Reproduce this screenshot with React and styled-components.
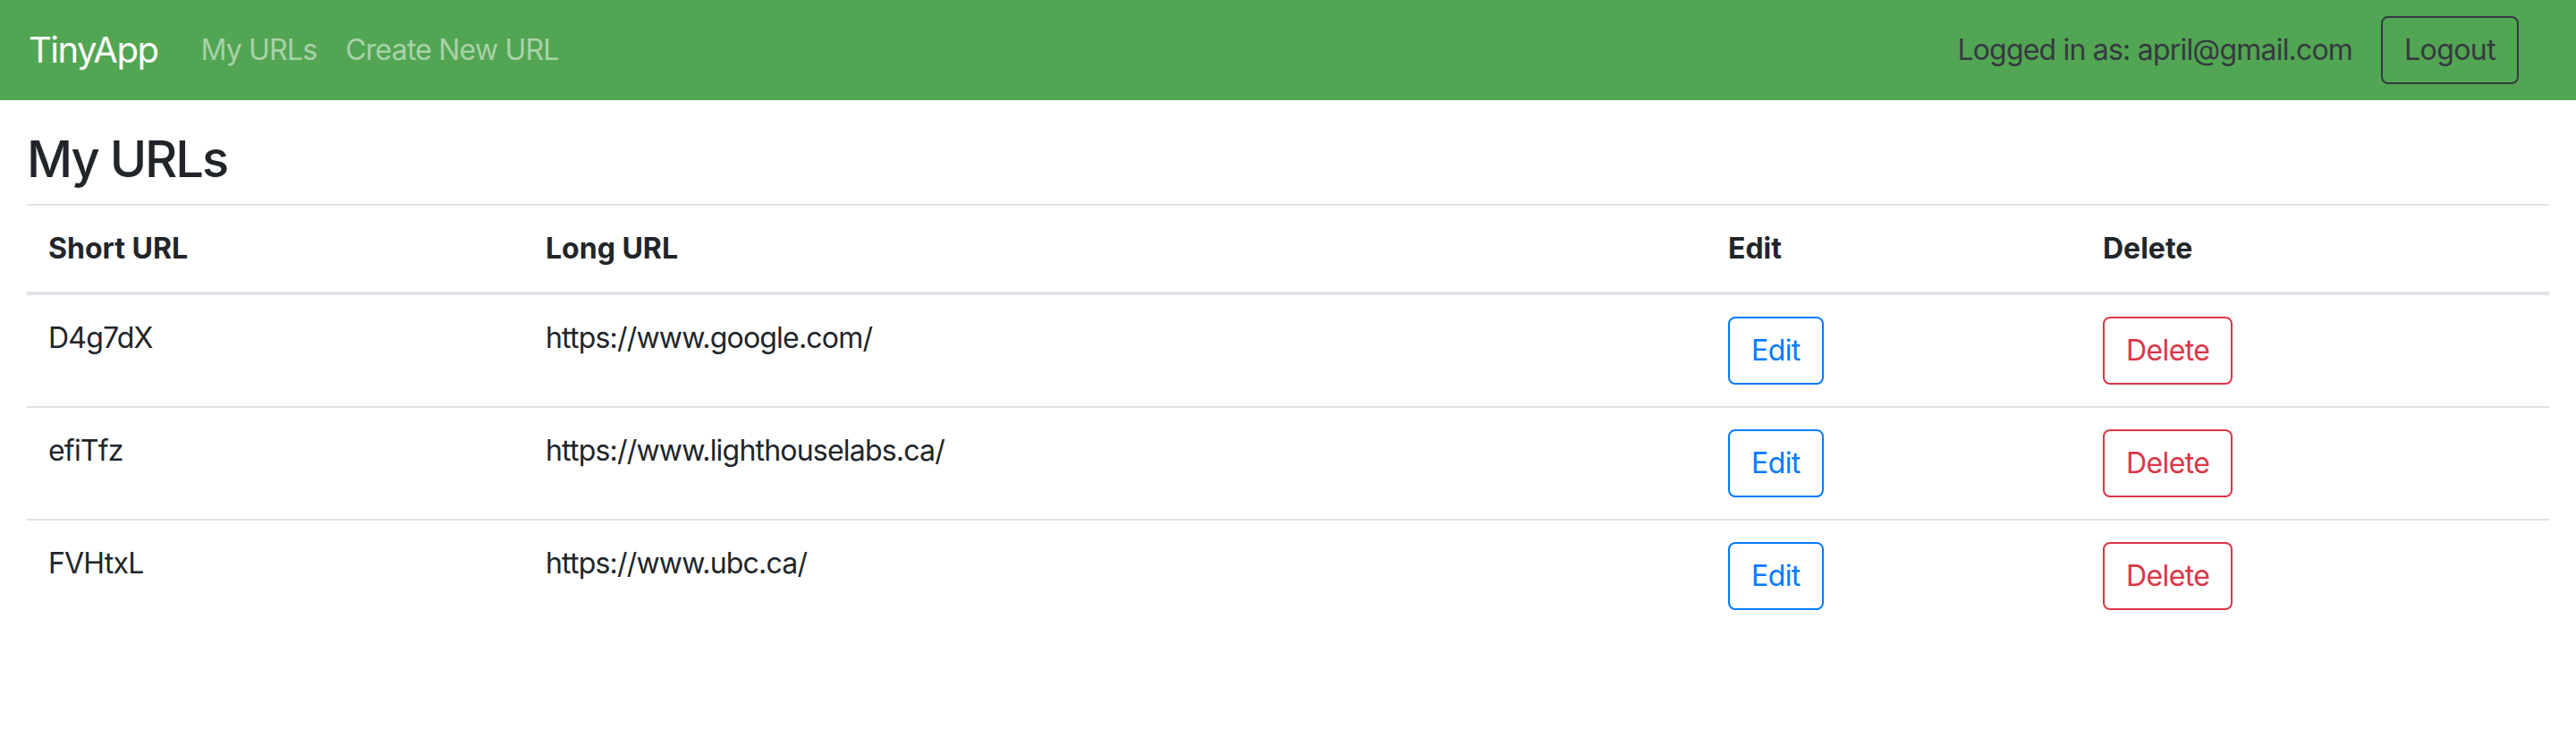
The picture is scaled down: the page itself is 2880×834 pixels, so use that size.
import React from "react";
import styled, { createGlobalStyle } from "styled-components";

const Global = createGlobalStyle`
  html, body { margin: 0; padding: 0; background: #fff; }
  body {
    font-family: Inter, "Noto Sans", "Liberation Sans", sans-serif;
    color: #212529;
    font-size: 32px;
    line-height: 1.5;
    letter-spacing: -0.8px;
  }
  * { box-sizing: border-box; }
`;

const Navbar = styled.nav`
  display: flex;
  align-items: center;
  background: #52a552;
  padding: 16px 32px;
`;

const Brand = styled.a`
  font-size: 40px;
  line-height: 60px;
  padding: 10px 0;
  margin-right: 32px;
  color: #fff;
  text-decoration: none;
  letter-spacing: -1.5px;
`;

const NavLink = styled.a`
  font-size: 32px;
  line-height: 48px;
  padding: 16px;
  color: rgba(255, 255, 255, 0.5);
  text-decoration: none;
`;

const RightSide = styled.div`
  margin-left: auto;
  display: flex;
  align-items: center;
  gap: 32px;
  margin-right: 32px;
`;

const UserText = styled.span`
  color: #343a40;
  font-size: 32px;
  line-height: 48px;
`;

const Button = styled.button`
  font-family: inherit;
  font-size: 32px;
  line-height: 48px;
  letter-spacing: -0.6px;
  padding: 12px 24px;
  border: 2px solid ${(p) => p.$color};
  color: ${(p) => p.$color};
  background: transparent;
  border-radius: 8px;
  cursor: pointer;
`;

const Main = styled.main`
  padding: 33px 30px 0;
`;

const Title = styled.h3`
  font-size: 56px;
  font-weight: 500;
  line-height: 1.2;
  margin: 0 0 16px;
  letter-spacing: -2px;
`;

const Table = styled.table`
  width: 100%;
  border-collapse: collapse;
  table-layout: fixed;
`;

const Th = styled.th`
  text-align: left;
  font-weight: 700;
  letter-spacing: 0;
  padding: 24px;
  line-height: 48px;
  border-top: 2px solid #dee2e6;
  border-bottom: 4px solid #dee2e6;
  vertical-align: bottom;
`;

const Td = styled.td`
  padding: 24px;
  line-height: 48px;
  vertical-align: top;
  border-top: ${(p) => (p.$first ? "none" : "2px solid #dee2e6")};
`;

const rows = [
  { short: "D4g7dX", long: "https://www.google.com/" },
  { short: "efiTfz", long: "https://www.lighthouselabs.ca/" },
  { short: "FVHtxL", long: "https://www.ubc.ca/" },
];

export default function App() {
  return (
    <>
      <Global />
      <Navbar>
        <Brand href="#">TinyApp</Brand>
        <NavLink href="#">My URLs</NavLink>
        <NavLink href="#">Create New URL</NavLink>
        <RightSide>
          <UserText>Logged in as: april@gmail.com</UserText>
          <Button $color="#343a40">Logout</Button>
        </RightSide>
      </Navbar>
      <Main>
        <Title>My URLs</Title>
        <Table>
          <colgroup>
            <col style={{ width: "556px" }} />
            <col style={{ width: "1322px" }} />
            <col style={{ width: "419px" }} />
            <col />
          </colgroup>
          <thead>
            <tr>
              <Th>Short URL</Th>
              <Th>Long URL</Th>
              <Th>Edit</Th>
              <Th>Delete</Th>
            </tr>
          </thead>
          <tbody>
            {rows.map((r, i) => (
              <tr key={r.short}>
                <Td $first={i === 0}>{r.short}</Td>
                <Td $first={i === 0}>{r.long}</Td>
                <Td $first={i === 0}>
                  <Button $color="#007bff">Edit</Button>
                </Td>
                <Td $first={i === 0}>
                  <Button $color="#dc3545">Delete</Button>
                </Td>
              </tr>
            ))}
          </tbody>
        </Table>
      </Main>
    </>
  );
}
